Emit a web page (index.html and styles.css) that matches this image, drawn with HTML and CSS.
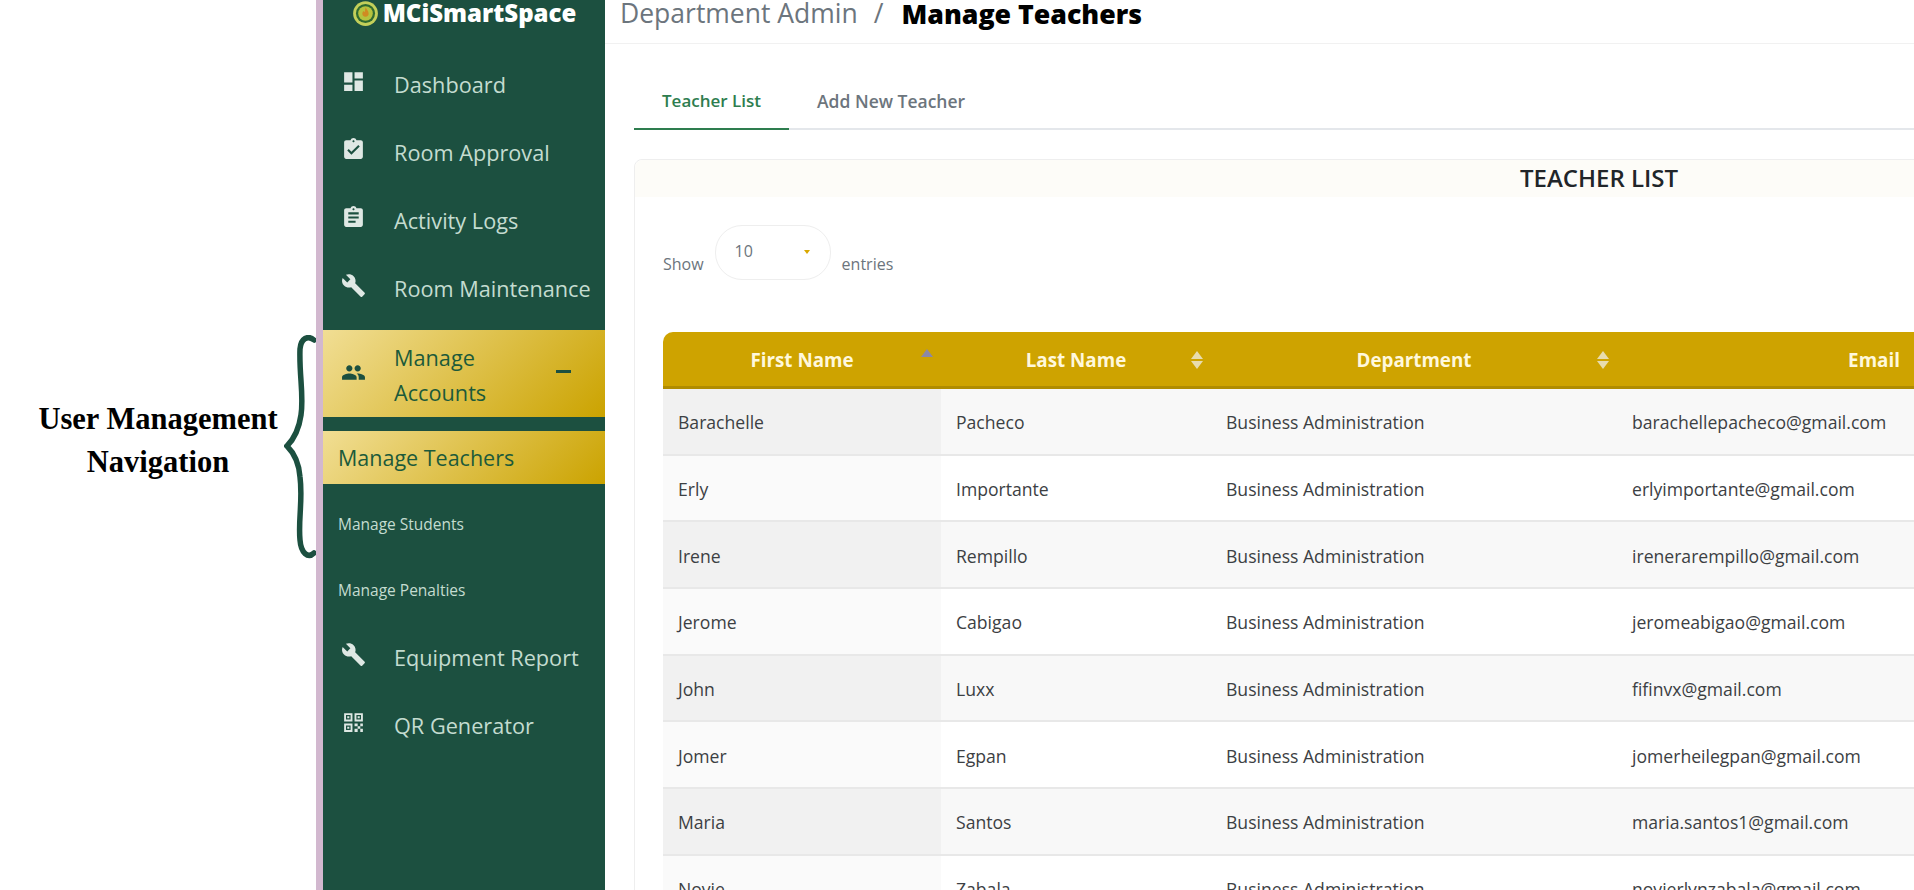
FILE: index.html
```html
<!DOCTYPE html>
<html lang="en">
	<head>
		<meta charset="UTF-8" />
		<meta name="viewport" content="width=device-width, initial-scale=1.0" />
		<title>Manage Teachers</title>
		<link rel="stylesheet" href="styles.css">
	</head>
	<body>
		<div class="page">
			<div class="annotation">
				<p class="annotation-label">User Management<br>Navigation</p>
				<svg class="brace" viewBox="0 0 32 224" width="32" height="224">
					<path d="M30 5C24 0 17 3 16 14C15 40 20 60 17 80C15 94 10 104 3 111C10 118 15 128 16 142C19 165 14 185 16 205C17 218 24 224 30 218" />
				</svg>
			</div>

			<aside class="sidebar">
				<div class="brand">
					<svg class="brand-logo" viewBox="0 0 24 24" width="27" height="27">
						<circle cx="12" cy="12" r="11" fill="#c3cf5a" />
						<circle cx="12" cy="12" r="8.500" fill="#2f6a30" />
						<circle cx="12" cy="12" r="6.500" fill="#b5c23e" />
						<path d="M12 6.500c1 2 2.800 3.200 2.800 5.500a2.800 2.800 0 0 1-5.600 0c0-1 .5-1.700 1.100-2.300.3.600.6.800 1 .9z" fill="#d08a22" />
					</svg>
					<span>MCiSmartSpace</span>
				</div>

				<a class="nav-item">
					<svg class="nav-icon" viewBox="0 0 24 24"><path d="M3 13h8V3H3v10zm0 8h8v-6H3v6zm10 0h8V11h-8v10zm0-18v6h8V3h-8z" /></svg>
					<span>Dashboard</span>
				</a>
				<a class="nav-item">
					<svg class="nav-icon" viewBox="0 0 24 24"><path d="M19 3h-4.180C14.400 1.840 13.300 1 12 1c-1.300 0-2.400.84-2.820 2H5c-1.100 0-2 .9-2 2v14c0 1.100.9 2 2 2h14c1.100 0 2-.9 2-2V5c0-1.100-.9-2-2-2zm-7 0c.55 0 1 .45 1 1s-.45 1-1 1-1-.45-1-1 .45-1 1-1zm-2 14l-4-4 1.410-1.410L10 14.170l6.590-6.590L18 9l-8 8z" /></svg>
					<span>Room Approval</span>
				</a>
				<a class="nav-item">
					<svg class="nav-icon" viewBox="0 0 24 24"><path d="M19 3h-4.180C14.400 1.840 13.300 1 12 1c-1.300 0-2.400.84-2.820 2H5c-1.100 0-2 .9-2 2v14c0 1.100.9 2 2 2h14c1.100 0 2-.9 2-2V5c0-1.100-.9-2-2-2zm-7 0c.55 0 1 .45 1 1s-.45 1-1 1-1-.45-1-1 .45-1 1-1zm2 14H7v-2h7v2zm3-4H7v-2h10v2zm0-4H7V7h10v2z" /></svg>
					<span>Activity Logs</span>
				</a>
				<a class="nav-item">
					<svg class="nav-icon" viewBox="0 0 24 24"><path d="M22.700 19l-9.100-9.100c.9-2.300.4-5-1.500-6.900-2-2-5-2.400-7.400-1.300L9 6 6 9 1.600 4.700C.4 7.100.9 10.100 2.900 12.100c1.900 1.900 4.600 2.400 6.900 1.500l9.100 9.100c.4.4 1 .4 1.400 0l2.300-2.300c.5-.4.5-1.100.1-1.400z" /></svg>
					<span>Room Maintenance</span>
				</a>

				<a class="nav-item nav-open">
					<svg class="nav-icon" viewBox="0 0 24 24"><path d="M16 11c1.660 0 2.990-1.340 2.990-3S17.660 5 16 5c-1.660 0-3 1.340-3 3s1.340 3 3 3zm-8 0c1.660 0 2.990-1.340 2.990-3S9.660 5 8 5C6.340 5 5 6.340 5 8s1.340 3 3 3zm0 2c-2.330 0-7 1.170-7 3.500V19h14v-2.500c0-2.330-4.670-3.500-7-3.500zm8 0c-.29 0-.62.02-.97.05 1.160.84 1.970 1.970 1.970 3.450V19h6v-2.500c0-2.330-4.670-3.500-7-3.500z" /></svg>
					<span class="nav-open-label">Manage<br>Accounts</span>
					<i class="nav-minus"></i>
				</a>
				<a class="sub-item sub-active">Manage Teachers</a>
				<a class="sub-item sub-first">Manage Students</a>
				<a class="sub-item">Manage Penalties</a>

				<a class="nav-item">
					<svg class="nav-icon" viewBox="0 0 24 24"><path d="M22.700 19l-9.100-9.100c.9-2.300.4-5-1.500-6.900-2-2-5-2.400-7.400-1.300L9 6 6 9 1.600 4.700C.4 7.100.9 10.100 2.900 12.100c1.900 1.900 4.600 2.400 6.900 1.500l9.100 9.100c.4.4 1 .4 1.400 0l2.300-2.300c.5-.4.5-1.100.1-1.400z" /></svg>
					<span>Equipment Report</span>
				</a>
				<a class="nav-item">
					<svg class="nav-icon" viewBox="0 0 24 24"><path fill-rule="evenodd" d="M3 11h8V3H3v8zM4.800 4.800h4.400v4.400H4.800V4.800zM6 6h2v2H6V6zM3 21h8v-8H3v8zM4.800 14.800h4.400v4.400H4.800v-4.400zM6 16h2v2H6v-2zM13 3v8h8V3h-8zM19.200 9.200h-4.400V4.800h4.400v4.400zM16 6h2v2h-2V6zM13 13h3v2.500h-3zM16 15.500h2.500V18H16zM18.500 13H21v2.500h-2.500zM13 18h3v3h-3zM18.500 18H21v3h-2.500z" /></svg>
					<span>QR Generator</span>
				</a>
			</aside>

			<main class="main">
				<header class="topbar">
					<span class="crumb">Department Admin</span>
					<span class="crumb-sep">/</span>
					<strong class="crumb-current">Manage Teachers</strong>
				</header>

				<div class="content">
					<nav class="tabs">
						<a class="tab tab-active">Teacher List</a>
						<a class="tab">Add New Teacher</a>
					</nav>

					<section class="card">
						<h2 class="card-title">TEACHER LIST</h2>
						<div class="card-body">
							<div class="length">
								<span>Show</span>
								<div class="length-select">
									<span>10</span>
									<i class="length-caret"></i>
								</div>
								<span>entries</span>
							</div>

							<table class="teachers">
								<colgroup>
									<col class="col-first">
									<col class="col-last">
									<col class="col-dept">
									<col class="col-email">
								</colgroup>
								<thead>
									<tr>
										<th class="sort-asc">First Name</th>
										<th class="sort-both">Last Name</th>
										<th class="sort-both">Department</th>
										<th>Email</th>
									</tr>
								</thead>
								<tbody>
									<tr><td>Barachelle</td><td>Pacheco</td><td>Business Administration</td><td>barachellepacheco@gmail.com</td></tr>
									<tr><td>Erly</td><td>Importante</td><td>Business Administration</td><td>erlyimportante@gmail.com</td></tr>
									<tr><td>Irene</td><td>Rempillo</td><td>Business Administration</td><td>irenerarempillo@gmail.com</td></tr>
									<tr><td>Jerome</td><td>Cabigao</td><td>Business Administration</td><td>jeromeabigao@gmail.com</td></tr>
									<tr><td>John</td><td>Luxx</td><td>Business Administration</td><td>fifinvx@gmail.com</td></tr>
									<tr><td>Jomer</td><td>Egpan</td><td>Business Administration</td><td>jomerheilegpan@gmail.com</td></tr>
									<tr><td>Maria</td><td>Santos</td><td>Business Administration</td><td>maria.santos1@gmail.com</td></tr>
									<tr><td>Novie</td><td>Zabala</td><td>Business Administration</td><td>novierlynzabala@gmail.com</td></tr>
								</tbody>
							</table>
						</div>
					</section>
				</div>
			</main>
		</div>
	</body>
</html>
```

FILE: styles.css
```css
/* Page frame: the screenshot is a crop, so everything past the window is cut */
body {
	margin: 0;
	background-color: #fff;
	font-family: "Open Sans", "Noto Sans", sans-serif;
	color: #333;
}
a {
	color: inherit;
	text-decoration: none;
}
.page {
	display: flex;
	height: 890px;
	overflow: hidden;
}

/* Left annotation */
.annotation {
	flex: 0 0 316px;
	display: flex;
	justify-content: flex-end;
	align-items: flex-start;
	box-sizing: border-box;
	padding-top: 335px;
}
.annotation-label {
	margin: 63px 6px 0 0;
	width: 240px;
	font-family: "Liberation Serif", serif;
	font-weight: bold;
	font-size: 30.500px;
	line-height: 43px;
	text-align: center;
	color: #000;
	white-space: nowrap;
}
.brace {
	flex: none;
}
.brace path {
	fill: none;
	stroke: #1c5040;
	stroke-width: 5.500;
	stroke-linecap: round;
}

/* Sidebar */
.sidebar {
	flex: 0 0 282px;
	border-left: 7px solid #d2b8cf;
	background-color: #1c5040;
	color: #c4dcd0;
}
.brand {
	display: flex;
	justify-content: center;
	align-items: flex-start;
	gap: 4px;
	height: 50px;
	font-weight: 800;
	font-size: 24px;
	line-height: 26px;
	color: #fff;
}
.brand-logo {
	flex: none;
}
.nav-item {
	display: flex;
	align-items: center;
	height: 68px;
	padding-left: 18px;
	font-size: 21.700px;
}
.nav-icon {
	flex: none;
	width: 25px;
	height: 25px;
	margin-right: 28px;
	margin-top: -5px;
	fill: #dfe8e4;
}
.nav-open {
	height: 87px;
	margin-top: 8px;
	margin-bottom: 14px;
	background: linear-gradient(135deg, #f1de94, #cba300);
	color: #1c5a3a;
}
.nav-open .nav-icon {
	margin-top: -3px;
	fill: #1c5040;
}
.nav-open-label {
	flex: 1;
	padding-top: 2px;
	line-height: 35px;
}
.nav-minus {
	width: 15px;
	height: 3px;
	margin-right: 34px;
	margin-top: -4px;
	background-color: #1c5040;
}
.sub-item {
	display: flex;
	align-items: center;
	height: 66px;
	padding-left: 15px;
	font-size: 15.500px;
}
.sub-first {
	margin-top: 7px;
}
.sub-active {
	height: 53px;
	background: linear-gradient(135deg, #f1de94, #cba300);
	color: #1c5a3a;
	font-size: 21.500px;
}

/* Main column */
.main {
	flex: 1;
	min-width: 0;
}
.topbar {
	display: flex;
	align-items: flex-start;
	box-sizing: border-box;
	height: 44px;
	padding-left: 15px;
	border-bottom: 1px solid #f1f1f1;
	font-size: 26.500px;
	line-height: 27px;
}
.crumb {
	color: #6c757d;
}
.crumb-sep {
	margin: 0 18px 0 16px;
	color: #6c757d;
}
.crumb-current {
	font-weight: 800;
	font-size: 26.700px;
	color: #000;
}
.content {
	padding: 28px 0 0 29px;
}
.tabs {
	display: flex;
	width: 1600px;
	height: 56px;
	border-bottom: 2px solid #e4e7eb;
}
.tab {
	padding: 17px 28px 0;
	font-weight: 600;
	font-size: 17.500px;
	color: #6c757d;
}
.tab-active {
	margin-bottom: -2px;
	border-bottom: 2px solid #2e7d4f;
	color: #2e7d4f;
	font-size: 17px;
}

/* Teacher list card, wider than the window */
.card {
	width: 1928px;
	margin-top: 29px;
	border: 1px solid #eeeeee;
	border-radius: 8px 0 0 0;
}
.card-title {
	margin: 0;
	height: 37px;
	background-color: #fdfcf8;
	border-radius: 8px 0 0 0;
	font-weight: 600;
	font-size: 24px;
	line-height: 35px;
	text-align: center;
	color: #212529;
}
.card-body {
	padding: 28px 0 0 28px;
}
.length {
	display: flex;
	align-items: flex-end;
	gap: 11px;
	height: 55px;
	font-size: 16px;
	line-height: 25px;
	color: #6c757d;
}
.length > span {
	padding-bottom: 3px;
}
.length-select {
	display: flex;
	align-items: center;
	justify-content: space-between;
	box-sizing: border-box;
	width: 116px;
	height: 55px;
	padding: 0 20px 2px 19px;
	border: 1px solid #eee;
	border-radius: 27px;
}
.length-caret {
	border-top: 4px solid #d9a800;
	border-left: 3px solid transparent;
	border-right: 3px solid transparent;
}

/* Table */
.teachers {
	table-layout: fixed;
	width: 1468px;
	margin-top: 52px;
	border-collapse: separate;
	border-spacing: 0;
	font-size: 17.600px;
}
.col-first {
	width: 278px;
}
.col-last {
	width: 270px;
}
.col-dept {
	width: 406px;
}
.col-email {
	width: 514px;
}
.teachers th {
	position: relative;
	box-sizing: border-box;
	height: 57px;
	padding-top: 3px;
	background-color: #cea300;
	border-bottom: 3px solid #b08c00;
	font-weight: 700;
	font-size: 18.800px;
	color: #fff8dc;
	text-align: center;
}
.teachers th:first-child {
	border-radius: 10px 0 0 0;
}
.teachers td {
	box-sizing: border-box;
	height: 66.700px;
	padding: 2px 15px 0;
	border-bottom: 2px solid #e8e8e8;
	white-space: nowrap;
	color: #3c4043;
}
.teachers tr:nth-child(odd) td {
	background-color: #f8f8f8;
}
.teachers tr:nth-child(odd) td:first-child {
	background-color: #f1f1f1;
}
.teachers tr:nth-child(even) td {
	background-color: #fff;
}
.teachers tr:nth-child(even) td:first-child {
	background-color: #fafafa;
}
/* Sort arrows sit over the header cell */
.sort-asc::before,
.sort-both::before,
.sort-both::after {
	content: "";
	position: absolute;
	right: 8px;
	border-left: 6px solid transparent;
	border-right: 6px solid transparent;
}
.sort-asc::before {
	right: 8px;
	top: 17px;
	border-bottom: 8px solid #8c88a4;
}
.sort-both::before {
	top: 19px;
	border-bottom: 8px solid #e8dcae;
}
.sort-both::after {
	top: 29px;
	border-top: 8px solid #e8dcae;
}
```
